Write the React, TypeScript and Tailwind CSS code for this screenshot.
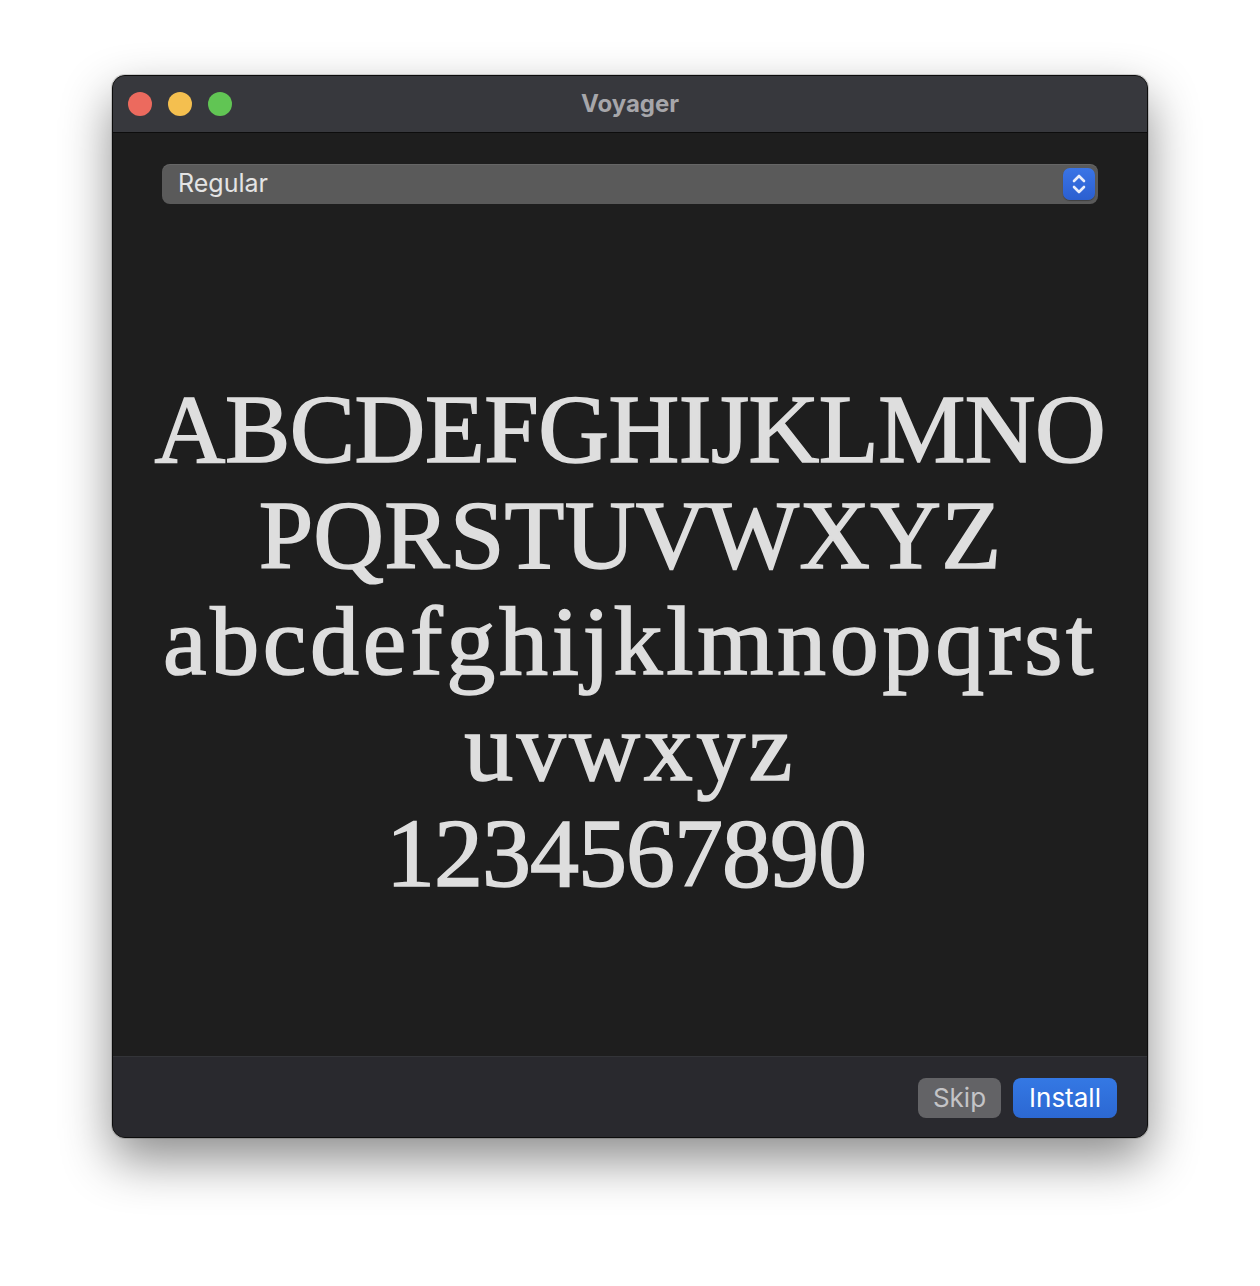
const lines = [
  { text: 'ABCDEFGHIJKLMNO', cls: 'tracking-[-0.5px]' },
  { text: 'PQRSTUVWXYZ', cls: 'tracking-[0.2px]' },
  { text: 'abcdefghijklmnopqrst', cls: 'tracking-[3.7px]' },
  { text: 'uvwxyz', cls: 'tracking-[3.5px]' },
  { text: '1234567890', cls: 'tracking-[-1px] -translate-x-[4px]' },
];

function Stepper() {
  return (
    <div className="w-[32px] h-[32px] rounded-[7px] bg-gradient-to-b from-[#3a74e6] to-[#2b5fd0] flex items-center justify-center shadow-[0_1px_1px_rgba(0,0,0,0.3)]">
      <svg width="16" height="22" viewBox="0 0 16 22" fill="none" stroke="#e9eefb" strokeWidth="2.6" strokeLinecap="round" strokeLinejoin="round">
        <path d="M3 8l5-5 5 5" />
        <path d="M3 14l5 5 5-5" />
      </svg>
    </div>
  );
}

export default function App() {
  return (
    <div className="w-[1260px] h-[1286px] bg-white pt-[75px] pl-[112px] font-['Inter','Liberation_Sans',sans-serif]">
      <div className="w-[1036px] h-[1063px] rounded-[13px] border border-[#0c0c0c] bg-[#1e1e1e] overflow-hidden flex flex-col shadow-[0_22px_50px_rgba(0,0,0,0.45),0_0_0_1px_rgba(0,0,0,0.15)]">
        {/* title bar */}
        <div className="relative h-[57px] shrink-0 bg-[#37383d] border-b border-[#0d0d0d] flex items-center">
          <div className="flex items-center gap-[16px] pl-[15px]">
            <span className="w-[24px] h-[24px] rounded-full bg-[#ec6a5e]" />
            <span className="w-[24px] h-[24px] rounded-full bg-[#f4bf4f]" />
            <span className="w-[24px] h-[24px] rounded-full bg-[#61c554]" />
          </div>
          <div className="absolute inset-0 flex items-center justify-center text-[24px] font-bold text-[#a6a6aa] pb-[1px]">
            Voyager
          </div>
        </div>

        {/* body */}
        <div className="flex-1 flex flex-col px-[49px] pt-[31px]">
          <div className="h-[40px] rounded-[8px] bg-[#5a5a5a] flex items-center justify-between pl-[16px] pr-[3px] shadow-[inset_0_1px_0_rgba(255,255,255,0.08)]">
            <span className="text-[25px] text-[#e4e4e4]">Regular</span>
            <Stepper />
          </div>

          <div className="mt-[172px] flex flex-col items-center text-[#dedede] font-['Liberation_Serif','DejaVu_Serif',serif] text-[98px] leading-[106px] [-webkit-text-stroke:1.6px_#dedede]">
            {lines.map((l) => (
              <div key={l.text} className={l.cls}>
                {l.text}
              </div>
            ))}
          </div>
        </div>

        {/* footer */}
        <div className="h-[81px] shrink-0 bg-[#29292e] border-t border-[#333438] flex items-start justify-end gap-[12px] pt-[21px] pr-[30px]">
          <button className="h-[40px] w-[83px] rounded-[8px] bg-[#636366] text-[26px] text-[#c4c4c6] flex items-center justify-center pb-[2px]">
            Skip
          </button>
          <button className="h-[40px] w-[104px] rounded-[8px] bg-gradient-to-b from-[#3478e4] to-[#2c68d2] text-[26px] text-white flex items-center justify-center pb-[2px]">
            Install
          </button>
        </div>
      </div>
    </div>
  );
}
